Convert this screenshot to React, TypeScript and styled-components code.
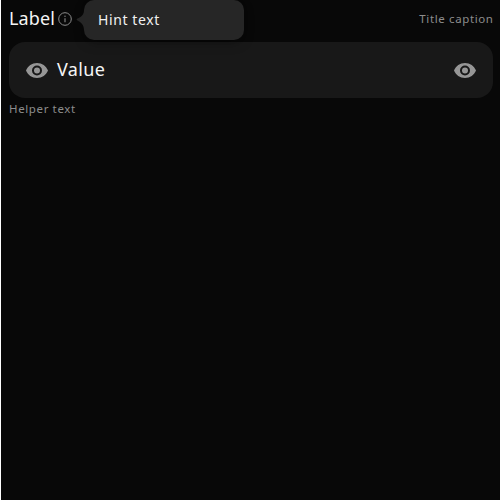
import React from 'react';
import styled, { createGlobalStyle } from 'styled-components';

const GlobalStyle = createGlobalStyle`
  * { box-sizing: border-box; }
  body { margin: 0; background: #080808; overflow: hidden; }
`;

const Page = styled.main`
  height: 500px;
  padding: 8px 7px 0 8px;
  border-left: 1px solid #fff;
  background: #080808;
  font-family: 'Noto Sans', sans-serif;
  font-weight: 400;
  color: #f5f5f5;
`;

const Header = styled.div`
  display: flex;
  align-items: center;
  height: 22px;
  margin-bottom: 12px;
`;

const Label = styled.label`
  width: 46px;
  margin-right: 3px;
  font-size: 18px;
  line-height: 22px;
  letter-spacing: 0.1px;
  transform: translateY(-1px);
`;

const HintAnchor = styled.span`
  position: relative;
  display: flex;
  width: 14px;
  height: 14px;
  color: #8c8c8c;
`;

const Tooltip = styled.div`
  position: absolute;
  left: 26px;
  top: -12px;
  width: 160px;
  height: 40px;
  padding: 11px 14px;
  border-radius: 10px;
  background: #262626;
  box-shadow: 0 4px 14px -4px rgba(0, 0, 0, 0.4), 0 1px 4px -1px rgba(0, 0, 0, 0.3);
  color: #f0f0f0;
  font-size: 14px;
  line-height: 18px;
  letter-spacing: 0.6px;
`;

const Arrow = styled.svg`
  position: absolute;
  left: -8px;
  top: 10px;
  width: 8px;
  height: 20px;
  fill: #262626;
`;

const Caption = styled.span<{ $end?: boolean }>`
  margin-left: ${({ $end }) => ($end ? 'auto' : '0')};
  color: #8c8c8c;
  font-size: 11.5px;
  line-height: 16px;
  letter-spacing: 0.62px;
  margin-right: -0.6px;
`;

const Field = styled.div`
  display: flex;
  align-items: center;
  height: 56px;
  padding: 0 16px;
  border-radius: 16px;
  background: #181818;
`;

const Value = styled.span`
  flex: 1;
  margin: 0 8px;
  font-size: 18px;
  line-height: 22px;
  letter-spacing: 0.35px;
  transform: translateY(-1px);
`;

const Helper = styled.div`
  display: flex;
  padding-top: 3px;
`;

const EyeSvg = styled.svg`
  width: 24px;
  height: 24px;
  fill: #969696;
  transform: translateY(0.5px);
`;

const Eye = () => (
  <EyeSvg viewBox="0 0 24 24">
    <path d="M12 4.500C7 4.500 2.700 7.600 1 12c1.700 4.400 6 7.500 11 7.500s9.300-3.100 11-7.500C21.300 7.600 17 4.500 12 4.500ZM12 17a5 5 0 1 1 0-10 5 5 0 0 1 0 10Zm0-8a3 3 0 1 0 0 6 3 3 0 0 0 0-6Z" />
  </EyeSvg>
);

const InfoIcon = () => (
  <svg width="14" height="14" viewBox="0 0 14 14" fill="none" stroke="currentColor">
    <circle cx="7" cy="7" r="6.300" />
    <path d="M7 6.200v4" strokeWidth="1.100" />
    <circle cx="7" cy="4.300" r=".7" fill="currentColor" stroke="none" />
  </svg>
);

export default function App() {
  return (
    <>
      <GlobalStyle />
      <Page>
        <Header>
          <Label>Label</Label>
          <HintAnchor>
            <InfoIcon />
            <Tooltip role="tooltip">
              <Arrow viewBox="0 0 8 20">
                <path d="M8 0C8 5 5 7 1.500 8.600Q-.3 9.500 1.500 10.400C5 12 8 15 8 20Z" />
              </Arrow>
              Hint text
            </Tooltip>
          </HintAnchor>
          <Caption $end>Title caption</Caption>
        </Header>
        <Field>
          <Eye />
          <Value>Value</Value>
          <Eye />
        </Field>
        <Helper>
          <Caption>Helper text</Caption>
        </Helper>
      </Page>
    </>
  );
}
